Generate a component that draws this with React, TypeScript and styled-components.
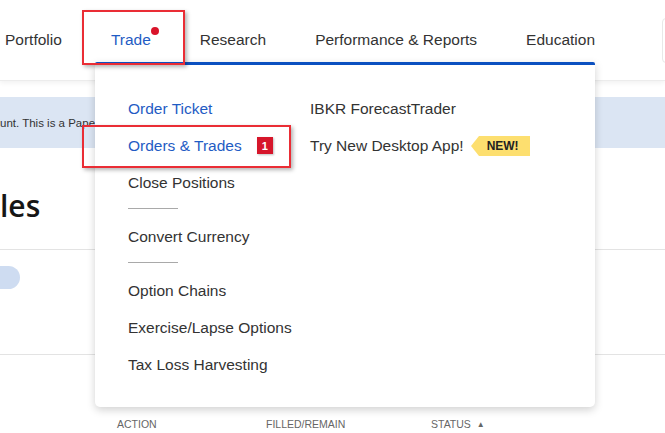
import React from 'react'
import styled, { createGlobalStyle } from 'styled-components'

const GlobalStyle = createGlobalStyle`
    html, body {
        margin: 0;
        padding: 0;
        background: #ffffff;
        overflow: hidden;
    }
    body {
        font-family: 'Liberation Sans', Arial, sans-serif;
        color: #333333;
    }
`

const navItems = [
    'Portfolio',
    'Trade',
    'Research',
    'Performance & Reports',
    'Education',
]

type MenuEntry =
    | { kind: 'item'; label: string; active?: boolean; badge?: string }
    | { kind: 'sep' }

const leftMenu: MenuEntry[] = [
    { kind: 'item', label: 'Order Ticket', active: true },
    { kind: 'item', label: 'Orders & Trades', active: true, badge: '1' },
    { kind: 'item', label: 'Close Positions' },
    { kind: 'sep' },
    { kind: 'item', label: 'Convert Currency' },
    { kind: 'sep' },
    { kind: 'item', label: 'Option Chains' },
    { kind: 'item', label: 'Exercise/Lapse Options' },
    { kind: 'item', label: 'Tax Loss Harvesting' },
]

export default function App() {
    return (
        <Page>
            <GlobalStyle />
            <Header>
                <Nav>
                    {navItems.map((item) => (
                        <NavItem key={item} $active={item === 'Trade'}>
                            {item}
                            {item === 'Trade' && (
                                <>
                                    <RedDot />
                                    <Caret />
                                </>
                            )}
                        </NavItem>
                    ))}
                    <SearchBox />
                </Nav>
            </Header>

            <Content>
                <Banner>unt. This is a Paper Trading Account</Banner>
                <Heading>les</Heading>
                <Divider />
                <PillRow>
                    <Pill />
                </PillRow>
                <Divider />
                <TableHead>
                    <HeadCell>Action</HeadCell>
                    <HeadCell>Filled/Remain</HeadCell>
                    <HeadCell>
                        Status <SortArrow>▲</SortArrow>
                    </HeadCell>
                </TableHead>
            </Content>

            <Dropdown>
                <MenuColumn $width={182}>
                    {leftMenu.map((entry, i) =>
                        entry.kind === 'sep' ? (
                            <Separator key={i} />
                        ) : (
                            <MenuItem key={i} $active={entry.active}>
                                {entry.label}
                                {entry.badge && <Badge>{entry.badge}</Badge>}
                            </MenuItem>
                        ),
                    )}
                </MenuColumn>
                <MenuColumn>
                    <MenuItem>IBKR ForecastTrader</MenuItem>
                    <MenuItem>
                        Try New Desktop App!
                        <NewTag>NEW!</NewTag>
                    </MenuItem>
                </MenuColumn>
            </Dropdown>

            {/* red annotation frames */}
            <Highlight $x={82} $y={10} $w={103} $h={55} />
            <Highlight $x={82} $y={125} $w={209} $h={43} />
        </Page>
    )
}

const Page = styled.div`
    position: relative;
    width: 665px;
    height: 433px;
    overflow: hidden;
    background: #ffffff;
`

const Header = styled.div`
    height: 80px;
    background: #ffffff;
    border-bottom: 1px solid #ececec;
    box-shadow: 0 2px 5px rgba(0, 0, 0, 0.06);
    overflow: hidden;
`

const Nav = styled.div`
    display: flex;
    align-items: center;
    height: 80px;
    padding-left: 5px;
    gap: 49px;
`

const NavItem = styled.div<{ $active?: boolean }>`
    position: relative;
    flex-shrink: 0;
    font-size: 15.5px;
    line-height: 20px;
    color: ${(p) => (p.$active ? '#1f5cc4' : '#333333')};
`

const RedDot = styled.span`
    position: absolute;
    right: -8px;
    top: -3px;
    width: 8px;
    height: 8px;
    border-radius: 50%;
    background: #d9142a;
`

const Caret = styled.span`
    position: absolute;
    left: 50%;
    top: 32px;
    margin-left: -11px;
    width: 0;
    height: 0;
    border-left: 11px solid transparent;
    border-right: 11px solid transparent;
    border-bottom: 11px solid #0b50c0;
`

const SearchBox = styled.div`
    flex-shrink: 0;
    margin-left: 18px;
    width: 100px;
    height: 43px;
    border: 1px solid #e8e8e8;
    border-radius: 4px;
`

const Content = styled.div`
    display: flex;
    flex-direction: column;
`

const Banner = styled.div`
    margin-top: 16px;
    height: 51px;
    display: flex;
    align-items: center;
    background: #dbe5f3;
    font-size: 11.5px;
    color: #333333;
    white-space: nowrap;
    overflow: hidden;
`

const Heading = styled.div`
    margin-top: 40px;
    font-family: 'Open Sans', 'Liberation Sans', sans-serif;
    font-size: 30px;
    font-weight: 600;
    line-height: 36px;
    color: #161616;
`

const Divider = styled.div`
    margin-top: 25px;
    height: 1px;
    background: #e3e3e3;
`

const PillRow = styled.div`
    height: 23px;
    margin-top: 16px;
    margin-bottom: 40px;
`

const Pill = styled.div`
    width: 44px;
    height: 23px;
    margin-left: -24px;
    border-radius: 12px;
    background: #cedcf1;
`

const TableHead = styled.div`
    display: grid;
    grid-template-columns: 149px 165px auto;
    padding-left: 117px;
    margin-top: 63px;
    font-size: 10.5px;
    line-height: 12px;
    color: #666666;
    text-transform: uppercase;
`

const HeadCell = styled.div`
    white-space: nowrap;
`

const SortArrow = styled.span`
    font-size: 8px;
    margin-left: 3px;
    vertical-align: 1px;
`

const Dropdown = styled.div`
    position: absolute;
    left: 95px;
    top: 62px;
    width: 500px;
    height: 345px;
    box-sizing: border-box;
    display: flex;
    padding: 25px 0 0 33px;
    background: #ffffff;
    border-top: 3px solid #0b50c0;
    border-radius: 2px 2px 5px 5px;
    box-shadow: 0 3px 9px rgba(0, 0, 0, 0.18);
    z-index: 3;
`

const MenuColumn = styled.div<{ $width?: number }>`
    display: flex;
    flex-direction: column;
    width: ${(p) => (p.$width ? `${p.$width}px` : 'auto')};
`

const MenuItem = styled.div<{ $active?: boolean }>`
    display: flex;
    align-items: center;
    height: 37px;
    font-size: 15.5px;
    white-space: nowrap;
    color: ${(p) => (p.$active ? '#1f5cc4' : '#333333')};
`

const Separator = styled.div`
    width: 50px;
    height: 1px;
    margin: 7px 0 9px;
    background: #a9a9a9;
`

const Badge = styled.span`
    margin-left: 15px;
    width: 16px;
    height: 17px;
    display: inline-flex;
    align-items: center;
    justify-content: center;
    background: #d6162b;
    color: #ffffff;
    font-size: 11px;
    font-weight: bold;
    box-shadow: 1px 1px 2px rgba(0, 0, 0, 0.25);
`

const NewTag = styled.span`
    position: relative;
    margin-left: 15px;
    height: 20px;
    padding: 0 11px 0 8px;
    display: inline-flex;
    align-items: center;
    background: #fddf6f;
    color: #222222;
    font-size: 12px;
    font-weight: bold;

    &::before {
        content: '';
        position: absolute;
        left: -8px;
        top: 0;
        border-top: 10px solid transparent;
        border-bottom: 10px solid transparent;
        border-right: 8px solid #fddf6f;
    }
`

const Highlight = styled.div<{ $x: number; $y: number; $w: number; $h: number }>`
    position: absolute;
    left: ${(p) => p.$x}px;
    top: ${(p) => p.$y}px;
    width: ${(p) => p.$w}px;
    height: ${(p) => p.$h}px;
    box-sizing: border-box;
    border: 2px solid #ea2d35;
    box-shadow: 2px 2px 4px rgba(0, 0, 0, 0.3);
    z-index: 4;
`
